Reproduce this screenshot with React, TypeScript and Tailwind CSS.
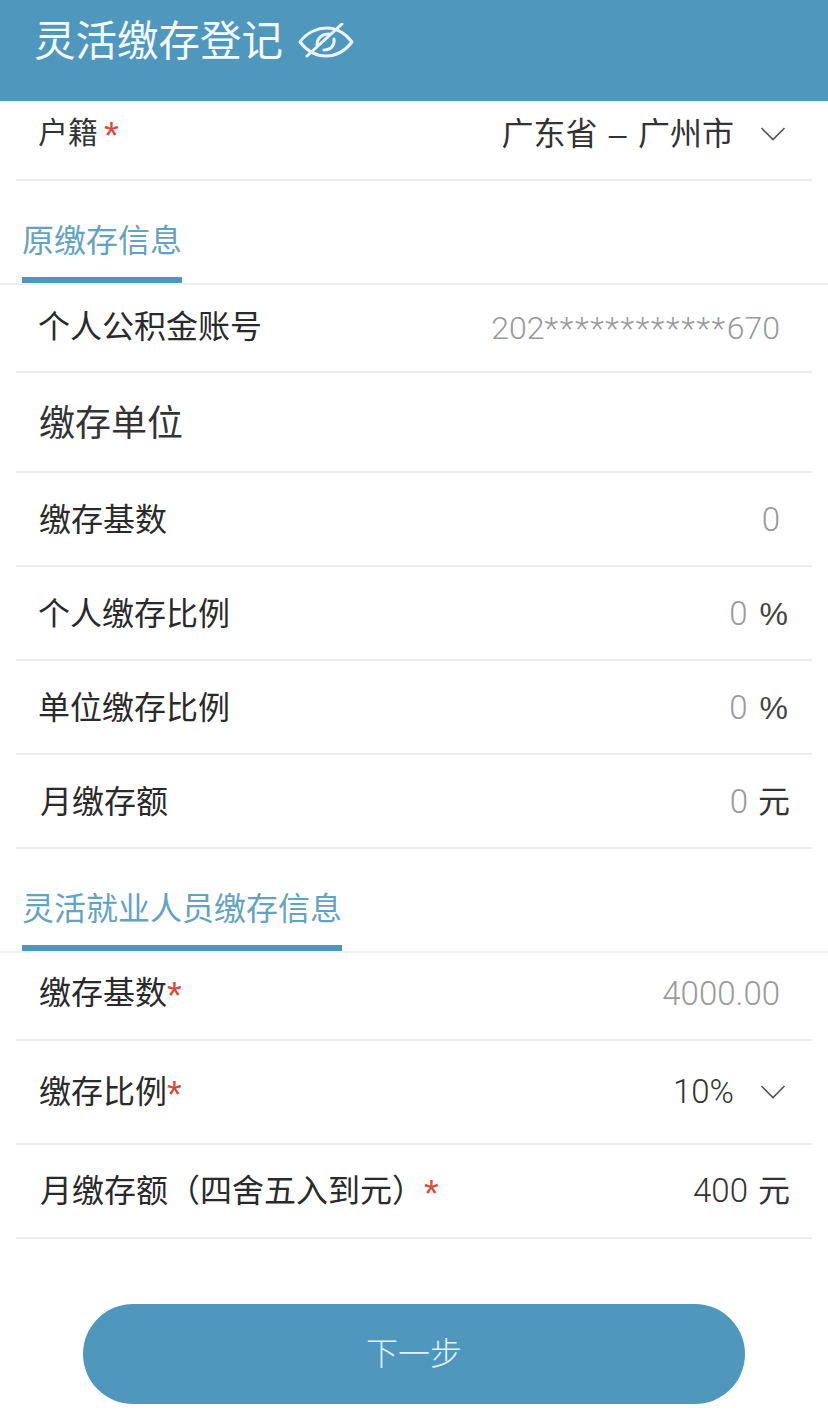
import type { ReactNode } from 'react';

const cjk = "font-['Liberation_Sans','Noto_Sans_CJK_SC',sans-serif]";
const num = "font-['Roboto','Noto_Sans_CJK_SC',sans-serif] font-light";

function Chevron() {
  return (
    <svg width="26" height="16" viewBox="0 0 26 16" fill="none" className="shrink-0">
      <path d="M1.5 2 L13 13.5 L24.5 2" stroke="#555" strokeWidth="1.6" />
    </svg>
  );
}

function EyeOff() {
  return (
    <svg width="56" height="40" viewBox="0 0 56 40" fill="none" stroke="#eaf4f8" strokeWidth="3" strokeLinecap="round" strokeLinejoin="round">
      <path d="M2 19 C9 9 20 5 29 5 C38 5 47 10 54 19 C47 28 38 33 28 33 C18 33 9 28 2 19 Z" />
      <path d="M9 33 L44 1" />
      <path d="M19 22 C19 15 24 11 31 11" />
      <path d="M36 16 C37 22 33 27 26 27" />
    </svg>
  );
}

function Star({ className = '' }: { className?: string }) {
  return <span className={`text-[#d9483b] text-[38px] leading-none ${className}`}>*</span>;
}

interface RowProps {
  height: string;
  label: ReactNode;
  children?: ReactNode;
}

function Row({ height, label, children }: RowProps) {
  return (
    <div className={`${height} mx-4 flex items-center justify-between border-b-2 border-[#ececec]`}>
      {label}
      {children}
    </div>
  );
}

function SectionTitle({ title, width }: { title: string; width: string }) {
  return (
    <div className="h-[104px] flex items-end border-b-2 border-[#f0f0f0]">
      <div className={`${width} ml-[22px] border-b-[6px] border-[#4f97bd] pb-[13px] text-[32px] leading-[46px] whitespace-nowrap text-[#64a3bf]`}>
        {title}
      </div>
    </div>
  );
}

function Label({ children, className = '' }: { children: ReactNode; className?: string }) {
  return <span className={`text-[32px] leading-[44px] text-[#2a2a2a] whitespace-nowrap ${className}`}>{children}</span>;
}

function Muted({ children }: { children: ReactNode }) {
  return <span className={`${num} text-[33px] leading-[40px] text-[#9a9a9a]`}>{children}</span>;
}

export default function App() {
  return (
    <div className={`w-[828px] h-[1423px] overflow-hidden bg-white ${cjk}`}>
      <header className="h-[101px] bg-[#4f97bd] flex items-start pl-[34px] pt-[12px] gap-[15px]">
        <h1 className="text-[41.5px] leading-[60px] text-[#f3f9fc] whitespace-nowrap">灵活缴存登记</h1>
        <div className="pt-[11px]"><EyeOff /></div>
      </header>

      <div className="h-[80px] mx-4 flex justify-between border-b-2 border-[#ececec] pt-[10px] pl-[22px] pr-[26px]">
        <div className="flex gap-[6px]">
          <span className="text-[30px] leading-[44px] text-[#333]">户籍</span>
          <Star className="mt-[6px]" />
        </div>
        <div className="flex items-center h-[46px] gap-[26px]">
          <span className="text-[32px] leading-[46px] text-[#333] whitespace-nowrap [word-spacing:2.5px]">广东省 – 广州市</span>
          <Chevron />
        </div>
      </div>

      <SectionTitle title="原缴存信息" width="w-[160px]" />

      <Row height="h-[88px]" label={<Label className="ml-[22px] pt-[2px] pb-[4px]">个人公积金账号</Label>}>
        <span className={`${num} mr-[32px] text-[32px] text-[#9a9a9a] leading-[40px]`}>
          202<span className="tracking-[1.6px]">************</span>670
        </span>
      </Row>
      <Row height="h-[100px]" label={<span className="ml-[23px] pt-[4px] text-[36px] leading-[50px] text-[#333]">缴存单位</span>} />
      <Row height="h-[94px] pt-[2px]" label={<Label className="ml-[23px]">缴存基数</Label>}>
        <span className="mr-[32px]"><Muted>0</Muted></span>
      </Row>
      <Row height="h-[94px] pt-[2px]" label={<Label className="ml-[22px]">个人缴存比例</Label>}>
        <span className="mr-[24px] flex items-center gap-[12px]"><Muted>0</Muted><span className="text-[32px] text-[#444]">%</span></span>
      </Row>
      <Row height="h-[94px] pt-[2px]" label={<Label className="ml-[22px]">单位缴存比例</Label>}>
        <span className="mr-[24px] flex items-center gap-[12px]"><Muted>0</Muted><span className="text-[32px] text-[#444]">%</span></span>
      </Row>
      <Row height="h-[94px] pt-[2px]" label={<Label className="ml-[24px]">月缴存额</Label>}>
        <span className="mr-[22px] flex items-center gap-[10px]"><Muted>0</Muted><span className="text-[32px] text-[#333]">元</span></span>
      </Row>

      <SectionTitle title="灵活就业人员缴存信息" width="w-[320px]" />

      <Row height="h-[88px]" label={<span className="ml-[23px] pb-[6px] flex items-center"><Label>缴存基数</Label><Star className="mt-[6px]" /></span>}>
        <span className="mr-[32px] mb-[4px]"><Muted>4000.00</Muted></span>
      </Row>
      <Row height="h-[104px]" label={<span className="ml-[23px] flex items-center"><Label>缴存比例</Label><Star className="mt-[6px]" /></span>}>
        <span className="mr-[26px] flex items-center gap-[26px]">
          <span className={`${num} text-[33px] leading-[40px] text-[#333]`}>10%</span>
          <Chevron />
        </span>
      </Row>
      <Row height="h-[94px]" label={<span className="ml-[24px] flex items-center"><Label>月缴存额（四舍五入到元）</Label><Star className="mt-[6px]" /></span>}>
        <span className="mr-[22px] flex items-center gap-[10px] text-[#333]">
          <span className={`${num} text-[33px] leading-[40px]`}>400</span>
          <span className="text-[32px]">元</span>
        </span>
      </Row>

      <div className="flex justify-center pt-[65px]">
        <button className="w-[662px] h-[100px] rounded-full bg-[#4f97bd] text-[32px] font-light text-[#e6f1f6]">下一步</button>
      </div>
    </div>
  );
}
